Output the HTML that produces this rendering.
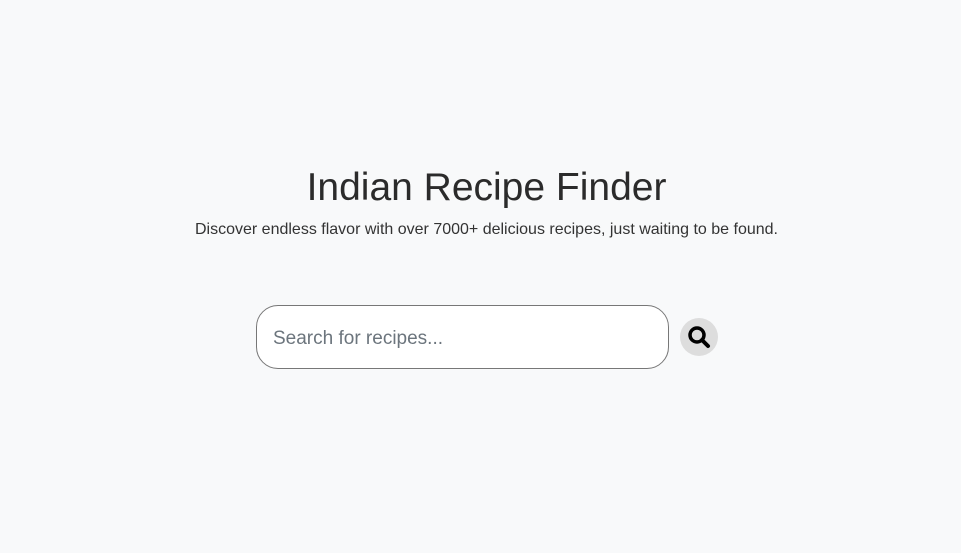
<!DOCTYPE html>
<html><head><style>
html,body{margin:0;padding:0;width:961px;height:553px;background:#f8f9fa;font-family:"Liberation Sans",sans-serif;color:#212529;overflow:hidden}
h1{position:absolute;top:165px;left:6px;width:961px;text-align:center;margin:0;font-weight:400;font-size:39px;line-height:46px;color:#2b2b2b}
p{position:absolute;top:220px;left:6px;width:961px;text-align:center;margin:0;font-size:16px;line-height:20px;color:#333}
.box{position:absolute;left:256px;top:305px;width:411px;height:62px;border:1px solid #777;border-radius:22px;background:#fff}
.box span{position:absolute;left:16px;top:22px;font-size:19px;color:#6c757d}
.btn{position:absolute;left:680px;top:318px;width:38px;height:38px;border-radius:50%;background:#ddd}
</style></head><body>
<h1>Indian Recipe Finder</h1>
<p>Discover endless flavor with over 7000+ delicious recipes, just waiting to be found.</p>
<div class="box"><span>Search for recipes...</span></div>
<div class="btn"><svg width="38" height="38" viewBox="0 0 38 38"><circle cx="17" cy="17" r="7" fill="none" stroke="#000" stroke-width="3.5"/><line x1="22" y1="22" x2="28" y2="28" stroke="#000" stroke-width="4" stroke-linecap="round"/></svg></div>
</body></html>
